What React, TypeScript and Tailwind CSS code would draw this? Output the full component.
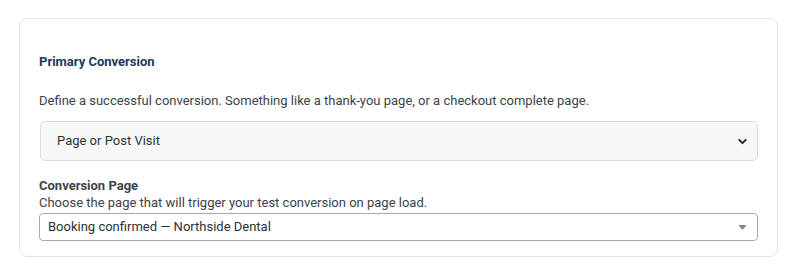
import { ChevronDown } from "lucide-react";

export default function App() {
  return (
    <div className="w-[796px] h-[275px] bg-white pt-[18px] pl-[19px] font-['Roboto',sans-serif] text-[13px] text-[#3c434a]">
      <div className="w-[759px] h-[239px] rounded-lg border border-[#e2e4e7] px-[19px] pt-[34px]">
        <h3 className="text-[13px] leading-[18px] font-bold text-[#1b3a5c]">Primary Conversion</h3>
        <p className="mt-[21px] leading-[18px]">
          Define a successful conversion. Something like a thank-you page, or a checkout complete page.
        </p>

        <div className="mt-[11px] ml-[1px] flex h-[40px] w-[718px] items-center justify-between rounded-[5px] border border-[#dcdcde] bg-[#f6f7f7] pl-[16px] pr-[8px] text-[#2c3338]">
          <span>Page or Post Visit</span>
          <ChevronDown size={13} strokeWidth={3.5} className="text-[#1d2327]" />
        </div>

        <div className="mt-[16px]">
          <div className="font-bold leading-[17px]">Conversion Page</div>
          <div className="leading-[18px]">Choose the page that will trigger your test conversion on page load.</div>
          <div className="mt-[1px] flex h-[28px] w-[719px] items-center justify-between rounded-[4px] border border-[#a7aaad] pl-[8px] pr-[8px] text-[#2c3338]">
            <span>Booking confirmed — Northside Dental</span>
            <svg width="9" height="5" viewBox="0 0 10 6" className="mr-[2px]">
              <path d="M0 0 L10 0 L5 6 Z" fill="#888" />
            </svg>
          </div>
        </div>
      </div>
    </div>
  );
}
